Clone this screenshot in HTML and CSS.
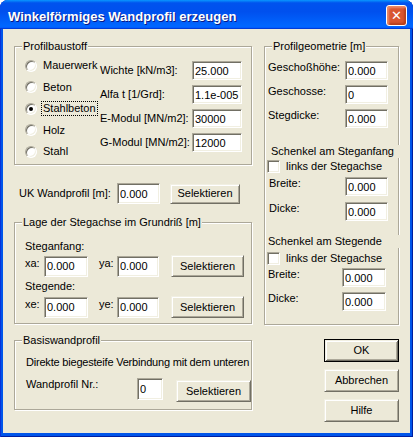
FILE: index.html
```html
<!DOCTYPE html>
<html lang="de">
<head>
<meta charset="utf-8">
<title>Winkelförmiges Wandprofil erzeugen</title>
<link rel="stylesheet" href="styles.css">
</head>
<body>
<div class="window">
  <div class="titlebar">
    <span class="title">Winkelförmiges Wandprofil erzeugen</span>
    <span class="close"><span class="xmark">✕</span></span>
  </div>
  <div class="client">
    <div class="col-left">
      <div class="group g1">
        <span class="legend">Profilbaustoff</span>
        <div class="radios">
          <div class="radio-row"><span class="radio"></span><span>Mauerwerk</span></div>
          <div class="radio-row"><span class="radio"></span><span>Beton</span></div>
          <div class="radio-row"><span class="radio checked"></span><span class="focus">Stahlbeton</span></div>
          <div class="radio-row"><span class="radio"></span><span>Holz</span></div>
          <div class="radio-row"><span class="radio"></span><span>Stahl</span></div>
        </div>
        <div class="fields">
          <span>Wichte [kN/m3]:</span><input class="edit w50" type="text" value="25.000">
          <span>Alfa t [1/Grd]:</span><input class="edit w50" type="text" value="1.1e-005">
          <span>E-Modul [MN/m2]:</span><input class="edit w50" type="text" value="30000">
          <span>G-Modul [MN/m2]:</span><input class="edit w50" type="text" value="12000">
        </div>
      </div>

      <div class="ukrow">
        <span class="uklabel">UK Wandprofil [m]:</span>
        <input class="edit w43 h21" type="text" value="0.000">
        <span class="btn uksel">Selektieren</span>
      </div>

      <div class="group g2">
        <span class="legend">Lage der Stegachse im Grundriß [m]</span>
        <div class="plain">Steganfang:</div>
        <div class="coordrow">
          <span class="clbl">xa:</span>
          <input class="edit w44 h21" type="text" value="0.000">
          <span class="clbl clbl2">ya:</span>
          <input class="edit w42 h21" type="text" value="0.000">
          <span class="btn csel">Selektieren</span>
        </div>
        <div class="plain mt3">Stegende:</div>
        <div class="coordrow mt3">
          <span class="clbl">xe:</span>
          <input class="edit w44 h21" type="text" value="0.000">
          <span class="clbl clbl2">ye:</span>
          <input class="edit w42 h21" type="text" value="0.000">
          <span class="btn csel">Selektieren</span>
        </div>
      </div>

      <div class="group g3">
        <span class="legend">Basiswandprofil</span>
        <div class="plain desc">Direkte biegesteife Verbindung mit dem unteren</div>
        <div class="wprow">
          <span class="wplabel">Wandprofil Nr.:</span>
          <input class="edit w26 h22" type="text" value="0">
          <span class="btn wpsel">Selektieren</span>
        </div>
      </div>
    </div>

    <div class="col-right">
      <div class="group gp">
        <span class="legend">Profilgeometrie [m]</span>
        <div class="grow first"><span class="glabel">Geschoßhöhe:</span><input class="edit w43" type="text" value="0.000"></div>
        <div class="grow"><span class="glabel">Geschosse:</span><input class="edit w43" type="text" value="0"></div>
        <div class="grow"><span class="glabel">Stegdicke:</span><input class="edit w43" type="text" value="0.000"></div>

        <div class="heading">Schenkel am Steganfang</div>
        <div class="checkrow"><span class="check"></span><span>links der Stegachse</span></div>
        <div class="grow sub b1"><span class="glabel">Breite:</span><input class="edit w43" type="text" value="0.000"></div>
        <div class="grow sub d1"><span class="glabel">Dicke:</span><input class="edit w43" type="text" value="0.000"></div>

        <div class="heading h2">Schenkel am Stegende</div>
        <div class="checkrow c2"><span class="check"></span><span>links der Stegachse</span></div>
        <div class="grow sub2 b2"><span class="glabel">Breite:</span><input class="edit w44" type="text" value="0.000"></div>
        <div class="grow sub2 d2"><span class="glabel">Dicke:</span><input class="edit w44" type="text" value="0.000"></div>
      </div>

      <div class="buttons">
        <span class="btn default">OK</span>
        <span class="btn dlg">Abbrechen</span>
        <span class="btn dlg">Hilfe</span>
      </div>
    </div>
  </div>
</div>
</body>
</html>
```

FILE: styles.css
```css
html, body {
  margin: 0;
  padding: 0;
  background: #ffffff;
}

body {
  font-family: "Liberation Sans", Arial, sans-serif;
  font-size: 11px;
  line-height: 13px;
  color: #000;
}

.window {
  width: 413px;
  height: 437px;
  box-sizing: border-box;
  display: flex;
  flex-direction: column;
  background: #0055ea;
  border-radius: 8px 8px 0 0;
  overflow: hidden;
  box-shadow: inset 1px 0 0 #0831d9, inset -1px 0 0 #001ea0, inset 0 -1px 0 #001ea0;
}

.titlebar {
  flex: none;
  height: 29px;
  box-sizing: border-box;
  display: flex;
  align-items: flex-start;
  padding: 0 6px 0 8px;
  background: linear-gradient(180deg, #0997ff 0%, #0053ee 10%, #0050ee 40%, #0066ff 88%, #0066ff 93%, #005bff 95%, #003dd7 97%, #003dd7 100%);
}

.title {
  color: #fff;
  font-weight: bold;
  font-size: 13px;
  line-height: 13px;
  padding-top: 10px;
  text-shadow: 1px 1px 0 #0a1883;
  white-space: nowrap;
}

.close {
  flex: none;
  margin-left: auto;
  margin-top: 5px;
  width: 21px;
  height: 21px;
  box-sizing: border-box;
  border: 1px solid #ffffff;
  border-radius: 3px;
  background: #d9552f;
  box-shadow: inset 2px 2px 2px #ea8a68, inset -2px -2px 2px #b8401c;
  display: flex;
  align-items: center;
  justify-content: center;
}

.xmark {
  color: #ffffff;
  font-family: "DejaVu Sans", sans-serif;
  font-weight: bold;
  font-size: 13px;
  line-height: 13px;
}

.client {
  flex: 1;
  margin: 0 3px 4px;
  background: #ece9d8;
  display: flex;
  gap: 12px;
  padding: 17px 0 0 11px;
}

.col-left {
  width: 238px;
  flex: none;
}

.col-right {
  width: 135px;
  flex: none;
}

/* group boxes (etched) */
.group {
  position: relative;
  box-sizing: border-box;
  border: 1px solid #aca899;
  box-shadow: inset 1px 1px 0 #fff, 1px 1px 0 #fff;
}

.legend {
  position: absolute;
  left: 7px;
  top: -7px;
  padding: 0 1px;
  background: #ece9d8;
  white-space: nowrap;
}

/* edits */
.edit {
  box-sizing: border-box;
  height: 19px;
  margin: 0;
  padding: 0 2px;
  font-family: inherit;
  font-size: 11px;
  color: #000;
  background: #fff;
  border: 1px solid;
  border-color: #aca899 #fff #fff #aca899;
  box-shadow: inset 1px 1px 0 #716f64, inset -1px -1px 0 #f1efe2;
  outline: none;
}

.w50 { width: 50px; }
.w43 { width: 43px; }
.w44 { width: 44px; }
.w42 { width: 42px; }
.w26 { width: 26px; }
.h21 { height: 21px; }
.h22 { height: 22px; }

/* push buttons */
.btn {
  box-sizing: border-box;
  display: flex;
  align-items: center;
  justify-content: center;
  background: #ece9d8;
  border: 1px solid;
  border-color: #f1efe2 #716f64 #716f64 #f1efe2;
  box-shadow: inset 1px 1px 0 #fff, inset -1px -1px 0 #aca899;
  white-space: nowrap;
}

/* Profilbaustoff */
.g1 {
  display: flex;
  height: 119px;
}

.radios {
  width: 75px;
  padding: 8px 0 0 10px;
}

.radio-row {
  display: flex;
  align-items: center;
  height: 21.5px;
}

.radio {
  position: relative;
  width: 12px;
  height: 12px;
  box-sizing: border-box;
  border-radius: 50%;
  background: #fff;
  border: 1px solid;
  border-color: #aca899 #fff #fff #aca899;
  box-shadow: inset 1px 1px 0 #716f64, inset -1px -1px 0 #f1efe2;
  margin-right: 6px;
  flex: none;
}

.radio.checked::after {
  content: "";
  position: absolute;
  left: 3px;
  top: 3px;
  width: 4px;
  height: 4px;
  border-radius: 50%;
  background: #000;
}

.focus {
  outline: 1px dotted #000;
  outline-offset: 0;
  padding: 0 1px;
  margin-left: -1px;
}

.fields {
  display: grid;
  grid-template-columns: 92px 50px;
  grid-auto-rows: 19px;
  row-gap: 5px;
  padding-top: 14px;
  align-items: center;
}

/* UK row */
.ukrow {
  display: flex;
  align-items: center;
  height: 21px;
  margin-top: 18px;
  padding-left: 5px;
}

.uklabel {
  width: 98px;
}

.uksel {
  width: 70px;
  height: 20px;
  margin-left: 10px;
}

/* Lage der Stegachse */
.g2 {
  height: 102px;
  margin-top: 18px;
  padding: 17px 0 0 10px;
}

.coordrow {
  display: flex;
  align-items: center;
  height: 22px;
  margin-top: 2px;
}

.mt3 {
  margin-top: 3px;
}

.clbl {
  width: 19px;
  align-self: flex-start;
  margin-top: 2px;
}

.clbl2 {
  width: 18px;
  margin-left: 11px;
}

.csel {
  width: 73px;
  height: 22px;
  margin-left: 12px;
}

/* Basiswandprofil */
.g3 {
  height: 70px;
  margin-top: 16px;
  padding: 15px 0 0 11px;
}

.desc {
  white-space: nowrap;
  letter-spacing: -0.2px;
}

.wprow {
  display: flex;
  align-items: flex-start;
  height: 24px;
  margin-top: 9px;
}

.wplabel {
  width: 111px;
}

.wpsel {
  width: 75px;
  height: 22px;
  margin-left: 13px;
  margin-top: 2px;
}

/* Profilgeometrie */
.gp {
  height: 279px;
  padding-left: 3px;
}

.grow {
  display: flex;
  align-items: flex-start;
  height: 19px;
  margin-top: 5px;
}

.grow.first {
  margin-top: 14px;
}

.glabel {
  width: 77px;
  flex: none;
}

.heading {
  margin: 17px -4px 0 3px;
  background: #ece9d8;
  white-space: nowrap;
}

.checkrow {
  display: flex;
  align-items: center;
  height: 13px;
  margin-top: 2px;
}

.check {
  width: 13px;
  height: 13px;
  box-sizing: border-box;
  background: #fff;
  border: 1px solid;
  border-color: #aca899 #fff #fff #aca899;
  box-shadow: inset 1px 1px 0 #716f64, inset -1px -1px 0 #f1efe2;
  margin: 0 6px 0 -1px;
  flex: none;
}

.sub .glabel {
  margin-left: 1px;
  width: 76px;
}

.b1 {
  margin-top: 4px;
}

.d1 {
  margin-top: 6px;
}

.heading.h2 {
  margin-top: 14px;
  margin-left: 0;
}

.checkrow.c2 {
  margin-top: 4px;
}

.sub2 .glabel {
  width: 74px;
}

.b2 {
  margin-top: 3px;
}

.d2 {
  margin-top: 5px;
}

/* dialog buttons */
.buttons {
  display: flex;
  flex-direction: column;
  gap: 7px;
  margin-top: 14px;
  padding-left: 60px;
}

.dlg,
.default {
  width: 75px;
  height: 23px;
}

.default {
  border: 1px solid #000;
  box-shadow: inset 1px 1px 0 #f1efe2, inset -1px -1px 0 #716f64, inset 2px 2px 0 #fff, inset -2px -2px 0 #aca899;
}
```
